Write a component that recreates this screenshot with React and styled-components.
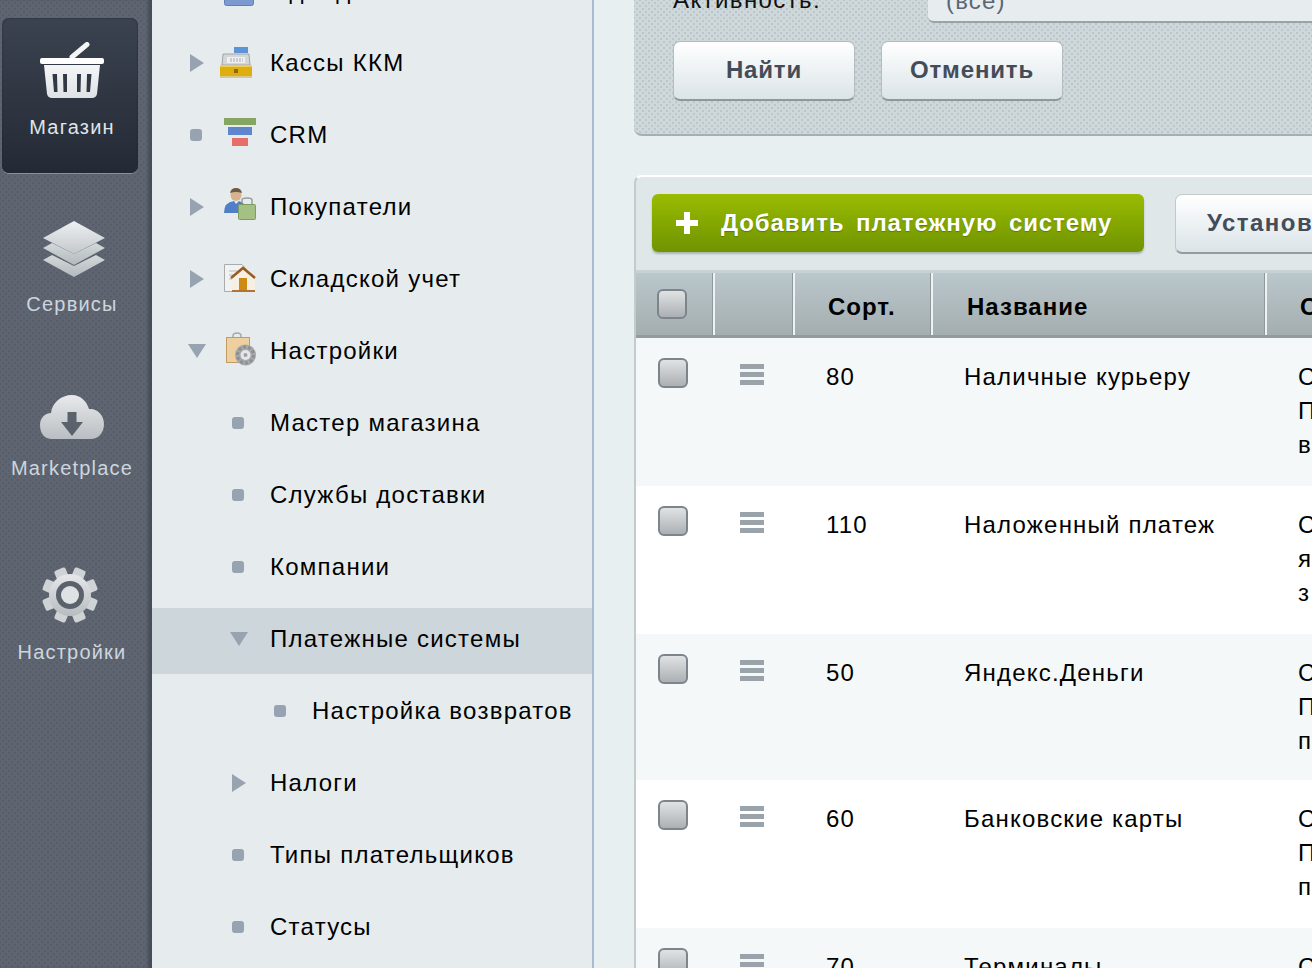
import React from 'react';
import styled, { createGlobalStyle } from 'styled-components';

const menu = [
  { text: 'Одежда', marker: 'arrow', icon: 'orders' },
  { text: 'Кассы ККМ', marker: 'arrow', icon: 'kkm', shift: -4, lift: 2 },
  { text: 'CRM', marker: 'dot', icon: 'crm', lift: 6 },
  { text: 'Покупатели', marker: 'arrow', icon: 'buyers', lift: 6 },
  { text: 'Складской учет', marker: 'arrow', icon: 'store', lift: 2 },
  { text: 'Настройки', marker: 'open', icon: 'settings', shift: 2, lift: 4 },
  { text: 'Мастер магазина', marker: 'dot', level: 1 },
  { text: 'Службы доставки', marker: 'dot', level: 1 },
  { text: 'Компании', marker: 'dot', level: 1 },
  { text: 'Платежные системы', marker: 'open', level: 1, active: true },
  { text: 'Настройка возвратов', marker: 'dot', level: 2 },
  { text: 'Налоги', marker: 'arrow', level: 1 },
  { text: 'Типы плательщиков', marker: 'dot', level: 1 },
  { text: 'Статусы', marker: 'dot', level: 1 },
];

const rows = [
  { sort: '80', name: 'Наличные курьеру', height: 148, lines: ['Способ', 'Платеж', 'в'] },
  { sort: '110', name: 'Наложенный платеж', height: 148, lines: ['Способ', 'я', 'з'] },
  { sort: '50', name: 'Яндекс.Деньги', height: 146, lines: ['Способ', 'Платеж', 'п'] },
  { sort: '60', name: 'Банковские карты', height: 148, lines: ['Способ', 'Платеж', 'п'] },
  { sort: '70', name: 'Терминалы', height: 148, lines: ['Способ', 'Платеж', 'п'] },
];

const GlobalStyle = createGlobalStyle`
  html, body {
    margin: 0;
    height: 100%;
    overflow: hidden;
  }
  body {
    font-family: "Liberation Sans", Arial, sans-serif;
    color: #000;
  }
`;

function BasketIcon() {
  return (
    <svg width="64" height="56" viewBox="0 0 64 56">
      <defs>
        <linearGradient id="basketFill" x1="0" y1="0" x2="0" y2="1">
          <stop offset="0" stopColor="#f4f5f6" />
          <stop offset="1" stopColor="#dfe3e6" />
        </linearGradient>
      </defs>
      <path d="M32 15 L47 2.500" stroke="#f4f5f6" strokeWidth="5" strokeLinecap="round" fill="none" />
      <rect x="0" y="16" width="64" height="6" rx="2" fill="#fff" />
      <path fillRule="evenodd" fill="url(#basketFill)" d="M4 23 H60 L57 52 Q56 56 52 56 H12 Q8 56 7 52 Z M12.500 32 L14 50 H17.500 L17 32 Z M23 32 L23.500 50 H27 L27 32 Z M37 32 L37 50 H40.500 L41 32 Z M47 32 L46.500 50 H50 L51.500 32 Z" />
    </svg>
  );
}

function LayersIcon() {
  return (
    <svg width="62" height="58" viewBox="0 0 62 58">
      <defs>
        <linearGradient id="layerTop" x1="0" y1="0" x2="0" y2="1">
          <stop offset="0" stopColor="#eef0f1" />
          <stop offset="1" stopColor="#c3c8cc" />
        </linearGradient>
        <linearGradient id="layerLow" x1="0" y1="0" x2="0" y2="1">
          <stop offset="0" stopColor="#d4d8da" />
          <stop offset="1" stopColor="#b3b9bd" />
        </linearGradient>
      </defs>
      <path d="M0 39 L9 34 L31 45 L53 34 L62 39 L31 56 Z" fill="url(#layerLow)" />
      <path d="M0 27 L9 22 L31 33 L53 22 L62 27 L31 44 Z" fill="url(#layerLow)" />
      <path d="M0 17 L31 0 L62 17 L31 33 Z" fill="url(#layerTop)" />
    </svg>
  );
}

function CloudIcon() {
  return (
    <svg width="64" height="45" viewBox="0 0 64 45">
      <defs>
        <linearGradient id="cloudFill" x1="0" y1="0" x2="0" y2="1">
          <stop offset="0" stopColor="#e8eaec" />
          <stop offset="1" stopColor="#b9bec2" />
        </linearGradient>
      </defs>
      <path fill="url(#cloudFill)" d="M12 44 C4 44 0 38 0 30 C0 22 6 18 11 18 C12 8 21 0 32 0 C41 0 47 7 49 14 C57 13 64 20 64 29 C64 38 58 44 51 44 Z" />
      <path d="M27.500 17 V27 H21 L32 41 L43 27 H36.500 V17 Z" fill="#5c626c" />
    </svg>
  );
}

function GearIcon() {
  const teeth = [0, 45, 90, 135, 180, 225, 270, 315];
  return (
    <svg width="58" height="58" viewBox="-29 -29 58 58">
      <defs>
        <linearGradient id="gearFill" x1="0" y1="0" x2="0" y2="1">
          <stop offset="0" stopColor="#e6e8ea" />
          <stop offset="1" stopColor="#b7bcc0" />
        </linearGradient>
      </defs>
      <g fill="#cfd3d6">
        {teeth.map((a) => (
          <rect key={a} x="-6" y="-28" width="12" height="14" rx="2" transform={`rotate(${a + 22.5})`} />
        ))}
      </g>
      <circle r="21" fill="url(#gearFill)" />
      <circle r="14" fill="#5c626c" />
      <circle r="9" fill="#dfe2e4" />
    </svg>
  );
}

function SmallIcon({ name }) {
  if (name === 'kkm') {
    return (
      <svg width="32" height="32" viewBox="0 0 32 32">
        <rect x="14" y="1" width="14" height="6" fill="#5b95d8" />
        <path d="M3 8 H29 L30 19 H2 Z" fill="#d4d6d8" stroke="#a2a4a6" />
        <path d="M7 11 H25 V17 H7 Z" fill="#eef0f1" />
        <path d="M10 13 H23 M10 15 H23" stroke="#a9abac" strokeDasharray="2 1" />
        <rect x="0" y="19" width="32" height="12" fill="#e0ad0f" />
        <rect x="0" y="19" width="32" height="2" fill="#f0cd50" />
        <rect x="0" y="30" width="32" height="2" fill="#d8c890" />
        <rect x="14" y="23" width="4" height="4" fill="#8a6a08" />
      </svg>
    );
  }
  if (name === 'crm') {
    return (
      <svg width="32" height="28" viewBox="0 0 32 28">
        <rect x="0" y="0" width="32" height="7" fill="#85a662" />
        <rect x="4" y="9" width="24" height="8" fill="#5f86cc" />
        <rect x="8" y="20" width="16" height="8" fill="#e86d6d" />
      </svg>
    );
  }
  if (name === 'buyers') {
    return (
      <svg width="32" height="32" viewBox="0 0 32 32">
        <ellipse cx="12" cy="7" rx="5.500" ry="6" fill="#d7b28f" />
        <path d="M6 5 Q7 0 12 0 Q17 0 18 5 Q12 3 6 5 Z" fill="#6d5a45" />
        <path d="M0 25 Q0 14 10 13 L12 16 L15 13 Q18 14 20 16 V25 Z" fill="#4f7fc8" />
        <path d="M18 15 V12 Q18 10 23 10 Q28 10 28 12 V17" fill="none" stroke="#9a9c98" strokeWidth="1.500" />
        <rect x="14.500" y="16.500" width="17" height="15" rx="1" fill="#a4c183" stroke="#7c9c62" />
      </svg>
    );
  }
  if (name === 'store') {
    return (
      <svg width="32" height="28" viewBox="0 0 32 28">
        <path d="M0.500 0.500 H18 L22 5 V27.500 H0.500 Z" fill="#f1f2f2" stroke="#a9abad" />
        <path d="M5 7 H14 M5 11 H12 M5 15 H10" stroke="#b8babb" />
        <path d="M8 27 V13 L19 4 L31 13 V27 Z" fill="#f6f0e4" />
        <path d="M7 14 L19 4 L31 14" fill="none" stroke="#9a5d1e" strokeWidth="2.500" />
        <rect x="15" y="14" width="8" height="13" fill="#cf8a14" />
        <rect x="8" y="26" width="23" height="2" fill="#b2723a" />
      </svg>
    );
  }
  if (name === 'settings') {
    return (
      <svg width="30" height="34" viewBox="0 0 30 34">
        <path d="M7 8 V4 Q7 1 11 1 Q15 1 15 4 V8" fill="none" stroke="#a8a8a6" strokeWidth="1.500" />
        <rect x="0.500" y="5.500" width="23" height="25" fill="#eecf9f" stroke="#c39c64" />
        <circle cx="19.500" cy="23" r="10.500" fill="#a6a8aa" />
        <circle cx="19.500" cy="23" r="8" fill="none" stroke="#8d8f91" strokeWidth="3" strokeDasharray="3 2" />
        <circle cx="19.500" cy="23" r="5" fill="#e6e7e8" />
        <circle cx="19.500" cy="23" r="2" fill="#a0a2a4" />
      </svg>
    );
  }
  return (
    <svg width="30" height="30" viewBox="0 0 30 30">
      <rect x="0.500" y="0.500" width="29" height="29" rx="2" fill="#7d9ad0" stroke="#5f7fbb" />
    </svg>
  );
}

function Marker({ kind }) {
  if (kind === 'arrow') return <ArrowRight />;
  if (kind === 'open') return <ArrowDown />;
  return <Dot />;
}

export default function App() {
  return (
    <>
      <GlobalStyle />
      <Page>
        <Rail>
          <RailItem $active $height={155} $gap={0}>
            <IconSlot $height={62}><BasketIcon /></IconSlot>
            <RailLabel $gap={14} $active>Магазин</RailLabel>
          </RailItem>
          <RailItem $height={135} $gap={47}>
            <IconSlot $height={60} $shift={4}><LayersIcon /></IconSlot>
            <RailLabel $gap={12}>Сервисы</RailLabel>
          </RailItem>
          <RailItem $height={135} $gap={37}>
            <IconSlot $height={50}><CloudIcon /></IconSlot>
            <RailLabel $gap={14}>Marketplace</RailLabel>
          </RailItem>
          <RailItem $height={135} $gap={37}>
            <IconSlot $height={62} $shift={-4}><GearIcon /></IconSlot>
            <RailLabel $gap={14}>Настройки</RailLabel>
          </RailItem>
        </Rail>

        <Menu>
          {menu.map((item) => (
            <MenuRow key={item.text} $active={item.active}>
              <MarkerSlot $level={item.level || 0}><Marker kind={item.marker} /></MarkerSlot>
              {item.icon && (
                <MenuIcon $shift={item.shift || 0} $lift={item.lift || 0}>
                  <SmallIcon name={item.icon} />
                </MenuIcon>
              )}
              <MenuText>{item.text}</MenuText>
            </MenuRow>
          ))}
        </Menu>

        <Content>
          <Filter>
            <FilterRow>
              <FilterLabel>Активность:</FilterLabel>
              <SelectBox>(все)</SelectBox>
            </FilterRow>
            <FilterButtons>
              <PlainButton>Найти</PlainButton>
              <PlainButton>Отменить</PlainButton>
            </FilterButtons>
          </Filter>

          <Card>
            <Toolbar>
              <GreenButton>
                <PlusMark viewBox="0 0 22 22">
                  <path d="M8 0 H14 V8 H22 V14 H14 V22 H8 V14 H0 V8 H8 Z" fill="#fff" />
                </PlusMark>
                Добавить платежную систему
              </GreenButton>
              <InstallButton>Установить</InstallButton>
            </Toolbar>
            <Table>
              <HeadRow>
                <HeadCell $width={79} $center><Check /></HeadCell>
                <HeadCell $width={80} />
                <HeadCell $width={138} $pad={33}>Сорт.</HeadCell>
                <HeadCell $width={334} $pad={34}>Название</HeadCell>
                <HeadCell $pad={33} $last>Способ</HeadCell>
              </HeadRow>
              {rows.map((row, i) => (
                <Row key={row.sort} $height={row.height} $alt={i % 2 === 0}>
                  <CheckCell><Check /></CheckCell>
                  <GripCell><Grip /></GripCell>
                  <SortCell>{row.sort}</SortCell>
                  <NameCell>{row.name}</NameCell>
                  <DescCell>
                    {row.lines.map((line) => <div key={line}>{line}</div>)}
                  </DescCell>
                </Row>
              ))}
            </Table>
          </Card>
        </Content>
      </Page>
    </>
  );
}

const dots = (color) => `
  background-image:
    radial-gradient(circle at center, ${color} 1.1px, transparent 1.5px),
    radial-gradient(circle at center, ${color} 1.1px, transparent 1.5px);
  background-size: 6px 6px;
  background-position: 0 0, 3px 3px;
`;

const Page = styled.div`
  display: flex;
  width: 1312px;
  height: 968px;
  overflow: hidden;
  background: #e8eff1;
`;

const Rail = styled.nav`
  flex: none;
  width: 152px;
  height: 968px;
  box-sizing: border-box;
  padding: 18px 14px 0 2px;
  background-color: #5e6571;
  ${dots('#575d69')}
  box-shadow: inset -5px 0 3px -1px #474d59;
`;

const RailItem = styled.div`
  display: flex;
  flex-direction: column;
  align-items: center;
  box-sizing: border-box;
  height: ${(p) => p.$height}px;
  margin-top: ${(p) => p.$gap}px;
  padding: ${(p) => (p.$active ? 21 : 0)}px 0 0 4px;
  border-radius: 7px;
  background: ${(p) => (p.$active ? 'linear-gradient(#3b4350, #242a35)' : 'none')};
  box-shadow: ${(p) => (p.$active ? '0 1px 0 #8b919b, inset 0 0 2px #20252e' : 'none')};
`;

const IconSlot = styled.div`
  display: flex;
  align-items: center;
  justify-content: center;
  height: ${(p) => p.$height}px;
  padding-left: ${(p) => Math.max(p.$shift || 0, 0)}px;
  padding-right: ${(p) => Math.max(-(p.$shift || 0), 0)}px;
`;

const RailLabel = styled.div`
  margin-top: ${(p) => p.$gap}px;
  font-size: 20px;
  line-height: 24px;
  letter-spacing: 1.2px;
  white-space: nowrap;
  color: ${(p) => (p.$active ? '#dfe5ea' : '#cdd6de')};
`;

const Menu = styled.aside`
  flex: none;
  width: 440px;
  height: 968px;
  border-right: 2px solid #a8bbd3;
  overflow: hidden;
  background: #e6eced;
`;

const MenuRow = styled.div`
  display: flex;
  align-items: center;
  height: 66px;
  margin-bottom: 6px;
  padding: 0 0 4px 38px;
  box-sizing: border-box;
  background: ${(p) => (p.$active ? '#cdd6da' : 'transparent')};

  &:first-child {
    margin-top: -40px;
  }
`;

const MarkerSlot = styled.div`
  flex: none;
  display: flex;
  align-items: center;
  width: ${(p) => (p.$level ? 38 : 34)}px;
  margin-left: ${(p) => p.$level * 42}px;
`;

const ArrowRight = styled.span`
  width: 0;
  height: 0;
  border-style: solid;
  border-width: 9px 0 9px 14px;
  border-color: transparent transparent transparent #98a3b1;
`;

const ArrowDown = styled.span`
  width: 0;
  height: 0;
  margin-left: -2px;
  border-style: solid;
  border-width: 14px 9px 0 9px;
  border-color: #98a3b1 transparent transparent transparent;
`;

const Dot = styled.span`
  width: 12px;
  height: 12px;
  border-radius: 3px;
  background: #98a3b1;
`;

const MenuIcon = styled.div`
  flex: none;
  display: flex;
  width: 32px;
  margin-left: ${(p) => p.$shift}px;
  margin-right: ${(p) => 14 - p.$shift}px;
  padding-bottom: ${(p) => p.$lift}px;
`;

const MenuText = styled.div`
  font-size: 24px;
  letter-spacing: 1.25px;
  white-space: nowrap;
  color: #000;
`;

const Content = styled.main`
  flex: none;
  width: 718px;
  box-sizing: border-box;
  padding-left: 40px;
`;

const Filter = styled.section`
  box-sizing: border-box;
  height: 136px;
  width: 700px;
  padding-left: 39px;
  background-color: #ced7da;
  ${dots('#bcc5c9')}
  border-bottom: 2px solid #a5aeb2;
  border-bottom-left-radius: 8px;
`;

const FilterRow = styled.div`
  display: flex;
  height: 22px;
`;

const FilterLabel = styled.div`
  flex: none;
  width: 255px;
  margin-top: -14px;
  font-size: 24px;
  letter-spacing: 1.4px;
  color: #111;
`;

const SelectBox = styled.div`
  flex: 1;
  box-sizing: border-box;
  height: 23px;
  padding-left: 18px;
  border-bottom: 2px solid #9ba3a6;
  border-bottom-left-radius: 6px;
  background: #e7edef;
  font-size: 24px;
  line-height: 2px;
  letter-spacing: 1.2px;
  color: #5b6675;
`;

const FilterButtons = styled.div`
  display: flex;
  gap: 26px;
  margin-top: 19px;
`;

const PlainButton = styled.button`
  width: 182px;
  height: 60px;
  padding: 0 0 2px;
  border: 1px solid #b4bcbf;
  border-bottom: 2px solid #8f9799;
  border-radius: 7px;
  background: linear-gradient(#ffffff, #dbe4e8);
  font-family: inherit;
  font-size: 24px;
  font-weight: bold;
  letter-spacing: 0.85px;
  color: #434c58;
`;

const Card = styled.section`
  box-sizing: border-box;
  width: 700px;
  margin-top: 39px;
  border-top: 2px solid #fff;
  border-left: 2px solid #c3cccd;
  border-top-left-radius: 8px;
  background: #dfe7e9;
`;

const Toolbar = styled.div`
  display: flex;
  align-items: flex-start;
  height: 96px;
  box-sizing: border-box;
  padding: 17px 0 0 16px;
  border-bottom: 3px solid #c8d2d6;
  overflow: hidden;
`;

const GreenButton = styled.div`
  flex: none;
  display: flex;
  align-items: center;
  box-sizing: border-box;
  width: 492px;
  height: 58px;
  padding-left: 24px;
  border-radius: 6px;
  background: linear-gradient(#9abb00, #6f9400);
  box-shadow: 0 2px 2px #aab5b0;
  font-size: 24px;
  font-weight: bold;
  letter-spacing: 0.9px;
  word-spacing: 4px;
  color: #fff;
  text-shadow: 0 1px 1px #5c7a00;
`;

const PlusMark = styled.svg`
  flex: none;
  width: 22px;
  height: 22px;
  margin-right: 23px;
`;

const InstallButton = styled.div`
  flex: none;
  box-sizing: border-box;
  width: 300px;
  height: 60px;
  margin-left: 31px;
  padding-left: 31px;
  border: 1px solid #c1c9cc;
  border-bottom: 2px solid #949c9f;
  border-radius: 7px;
  background: linear-gradient(#ffffff, #dbe4e8);
  font-size: 24px;
  font-weight: bold;
  line-height: 56px;
  letter-spacing: 1.5px;
  color: #434c58;
`;

const Table = styled.div`
  display: flex;
  flex-direction: column;
`;

const HeadRow = styled.div`
  display: flex;
  height: 65px;
  box-sizing: border-box;
  border-bottom: 3px solid #929b9d;
  background: linear-gradient(#bac7cb, #a4aeb0);
`;

const HeadCell = styled.div`
  flex: ${(p) => (p.$last ? 1 : 'none')};
  display: flex;
  align-items: center;
  justify-content: ${(p) => (p.$center ? 'center' : 'flex-start')};
  box-sizing: border-box;
  width: ${(p) => p.$width || 100}px;
  padding: ${(p) => (p.$center ? '0 5px 0 0' : `6px 0 0 ${p.$pad || 0}px`)};
  border-right: ${(p) => (p.$last ? 'none' : '2px solid #eef2f3')};
  box-shadow: ${(p) => (p.$last ? 'none' : 'inset -1px 0 0 #8f999c')};
  font-size: 24px;
  font-weight: bold;
  letter-spacing: 1px;
  white-space: nowrap;
  color: #000;
`;

const Row = styled.div`
  display: flex;
  height: ${(p) => p.$height}px;
  background: ${(p) => (p.$alt ? '#f5f8f9' : '#fff')};
  font-size: 24px;
  letter-spacing: 1.2px;
`;

const CheckCell = styled.div`
  flex: none;
  width: 79px;
  box-sizing: border-box;
  display: flex;
  justify-content: center;
  padding: 20px 5px 0 0;
`;

const Check = styled.span`
  display: block;
  box-sizing: border-box;
  width: 30px;
  height: 30px;
  border: 2px solid #7c858b;
  border-radius: 6px;
  background: linear-gradient(#e0e3e4, #abb0b4);
`;

const GripCell = styled.div`
  flex: none;
  width: 80px;
  box-sizing: border-box;
  padding: 26px 0 0 25px;
`;

const Grip = styled.span`
  display: block;
  width: 24px;
  height: 21px;
  background: linear-gradient(
    #9aa3a9 0 5px,
    transparent 5px 8px,
    #9aa3a9 8px 13px,
    transparent 13px 16px,
    #9aa3a9 16px 21px
  );
`;

const SortCell = styled.div`
  flex: none;
  width: 138px;
  box-sizing: border-box;
  padding: 24px 0 0 31px;
  line-height: 30px;
`;

const NameCell = styled.div`
  flex: none;
  width: 334px;
  box-sizing: border-box;
  padding: 24px 0 0 31px;
  line-height: 30px;
  white-space: nowrap;
`;

const DescCell = styled.div`
  flex: 1;
  padding: 22px 0 0 31px;
  line-height: 34px;
  white-space: nowrap;
`;
